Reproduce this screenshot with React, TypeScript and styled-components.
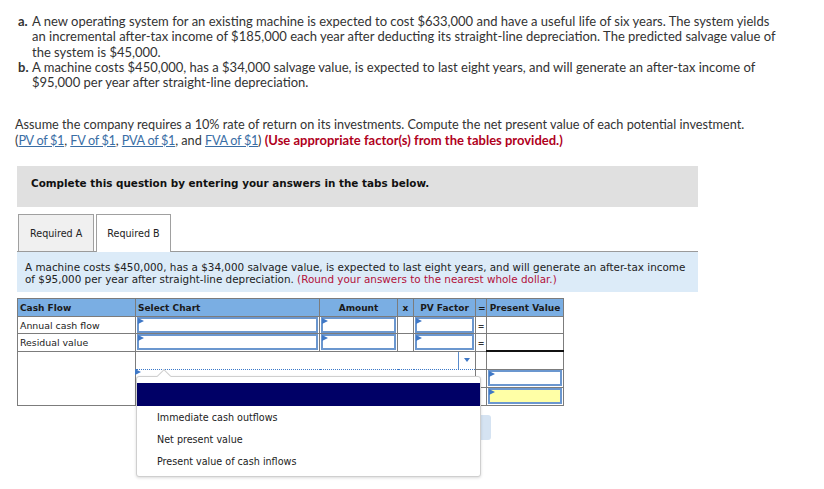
import React from "react";
import styled, { createGlobalStyle } from "styled-components";

const Global = createGlobalStyle`
  html, body { margin: 0; padding: 0; background: #fff; }
  body { font-family: "Lato", "Liberation Sans", sans-serif; color: #333; }
`;

const Page = styled.div`
  width: 824px;
  height: 489px;
  padding-top: 14px;
  box-sizing: border-box;
  position: relative;
  overflow: hidden;
`;

const Problem = styled.div`
  display: flex;
  flex-direction: column;
  padding-left: 18px;
  font-size: 13px;
  line-height: 15.3px;
  color: #333;
`;

const Item = styled.div`
  display: flex;
`;

const ItemLabel = styled.span`
  width: 14px;
  flex: none;
  font-weight: 700;
`;

const Assume = styled.p`
  margin: 27px 0 0 15px;
  font-size: 12.7px;
  line-height: 15.3px;
  color: #333;
`;

const Link = styled.a`
  color: #3a6ea5;
  text-decoration: underline;
  letter-spacing: -0.3px;
`;

const Red = styled.span`
  color: #b0001c;
  font-weight: 700;
  font-size: 13px;
`;

const Banner = styled.div`
  margin: 18px 0 0 17px;
  width: 681px;
  height: 41px;
  box-sizing: border-box;
  background: #e0e0e0;
  padding: 11px 0 0 14px;
  font-family: "DejaVu Sans", Verdana, sans-serif;
  font-weight: 700;
  font-size: 10.4px;
  color: #111;
`;

const Tabs = styled.div`
  display: flex;
  gap: 2px;
  margin: 7px 0 0 17px;
  width: 681px;
  border-bottom: 1px solid #9a9a9a;
  align-items: flex-end;
`;

const Tab = styled.div<{ $active?: boolean }>`
  box-sizing: border-box;
  padding: 0 ${(p) => (p.$active ? 10 : 11)}px;
  display: flex;
  align-items: center;
  border: 1px solid #a0a0a0;
  border-bottom: none;
  background: ${(p) => (p.$active ? "#fff" : "#f0f0f0")};
  margin-bottom: ${(p) => (p.$active ? "-1px" : "0")};
  height: ${(p) => (p.$active ? "38px" : "37px")};
  font-family: "DejaVu Sans", Verdana, sans-serif;
  font-size: 9.6px;
  color: #222;
  &:first-child { margin-left: 1px; }
`;

const Info = styled.div`
  margin-left: 17px;
  width: 681px;
  height: 40px;
  box-sizing: border-box;
  background: #dcebf8;
  padding: 10px 0 0 8px;
  font-family: "DejaVu Sans", Verdana, sans-serif;
  font-size: 10.4px;
  line-height: 11.5px;
  color: #222;
  white-space: nowrap;
`;

const Hint = styled.span`
  color: #b3103a;
`;

const TableWrap = styled.div`
  position: relative;
  margin: 6px 0 0 17px;
  width: 560px;
`;

const Grid = styled.table`
  border-collapse: collapse;
  table-layout: fixed;
  width: 546px;
  font-family: "DejaVu Sans", Verdana, sans-serif;
  font-size: 9.4px;
  color: #222;
`;

const Col = styled.col<{ $w: number }>`
  width: ${(p) => p.$w}px;
`;

const Th = styled.th<{ $align?: string }>`
  height: 17px;
  padding: 0 2px;
  background: #7aaee3;
  border: 1px solid #7c7c7c;
  font-weight: 700;
  font-size: 9px;
  color: #1a1a1a;
  text-align: ${(p) => p.$align || "left"};
  white-space: nowrap;
  overflow: hidden;
`;

const Td = styled.td<{ $center?: boolean; $total?: boolean }>`
  height: 16px;
  padding: 0;
  border: 1px solid #7c7c7c;
  border-top: ${(p) => (p.$total ? "2px solid #111" : "1px solid #7c7c7c")};
  text-align: ${(p) => (p.$center ? "center" : "left")};
  vertical-align: middle;
  white-space: nowrap;
`;

const Label = styled.span`
  padding-left: 2px;
`;

const Eq = styled.span`
  font-weight: 700;
  font-size: 8px;
  color: #333;
`;

const InputBox = styled.div<{ $yellow?: boolean }>`
  position: relative;
  height: 16px;
  box-sizing: border-box;
  border: 2px solid #6b97cf;
  background: ${(p) => (p.$yellow ? "#ffffa6" : "#fff")};
  margin: 0 1px;
`;

const Flag = styled.span`
  position: absolute;
  left: -1px;
  top: -1px;
  width: 0;
  height: 0;
  border-top: 3px solid transparent;
  border-bottom: 3px solid transparent;
  border-left: 6px solid #3f78c6;
`;

const SelectCell = styled.td`
  padding: 0;
  border: 1px dotted #3a78c9;
  vertical-align: top;
  position: relative;
`;

const SelectBox = styled.div<{ $h: number }>`
  position: relative;
  height: ${(p) => p.$h}px;
  display: flex;
  justify-content: flex-end;
`;

const Arrow = styled.div`
  width: 16px;
  height: 100%;
  border-left: 1px solid #5a8ccc;
  display: flex;
  align-items: center;
  justify-content: center;
  &::after {
    content: "";
    border-left: 3.5px solid transparent;
    border-right: 3.5px solid transparent;
    border-top: 4px solid #3f78c6;
  }
`;

const Popup = styled.div`
  position: absolute;
  left: 119px;
  top: 78px;
  width: 345px;
  height: 101px;
  box-sizing: border-box;
  background: #fff;
  border: 1px solid #cfcfcf;
  border-radius: 3px;
  box-shadow: 0 1px 3px rgba(0, 0, 0, 0.15);
  padding-top: 6px;
  font-family: "DejaVu Sans", Verdana, sans-serif;
  font-size: 9.6px;
  color: #222;
  z-index: 3;
  &::before {
    content: "";
    position: absolute;
    left: 22px;
    top: -6px;
    width: 9px;
    height: 9px;
    background: #fff;
    border-left: 1px solid #cfcfcf;
    border-top: 1px solid #cfcfcf;
    transform: rotate(45deg);
  }
`;

const Option = styled.div<{ $selected?: boolean }>`
  height: ${(p) => (p.$selected ? 23 : 22)}px;
  display: flex;
  align-items: center;
  padding-left: 20px;
  background: ${(p) => (p.$selected ? "#000066" : "transparent")};
  position: relative;
`;

const NavButton = styled.div`
  margin: 9px 0 0 390px;
  width: 84px;
  height: 25px;
  border-radius: 3px;
  background: #d5e3f2;
`;

export default function App() {
  return (
    <Page>
      <Global />
      <Problem>
        <Item>
          <ItemLabel>a.</ItemLabel>
          <span>
            A new operating system for an existing machine is expected to cost $633,000 and have a useful life of six years. The system yields
            <br />
            an incremental after-tax income of $185,000 each year after deducting its straight-line depreciation. The predicted salvage value of
            <br />
            the system is $45,000.
          </span>
        </Item>
        <Item>
          <ItemLabel>b.</ItemLabel>
          <span>
            A machine costs $450,000, has a $34,000 salvage value, is expected to last eight years, and will generate an after-tax income of
            <br />
            $95,000 per year after straight-line depreciation.
          </span>
        </Item>
      </Problem>
      <Assume>
        Assume the company requires a 10% rate of return on its investments. Compute the net present value of each potential investment.
        <br />
        (<Link>PV of $1</Link>, <Link>FV of $1</Link>, <Link>PVA of $1</Link>, and <Link>FVA of $1</Link>){" "}
        <Red>(Use appropriate factor(s) from the tables provided.)</Red>
      </Assume>
      <Banner>Complete this question by entering your answers in the tabs below.</Banner>
      <Tabs>
        <Tab>Required A</Tab>
        <Tab $active>Required B</Tab>
      </Tabs>
      <Info>
        A machine costs $450,000, has a $34,000 salvage value, is expected to last eight years, and will generate an after-tax income
        <br />
        of $95,000 per year after straight-line depreciation. <Hint>(Round your answers to the nearest whole dollar.)</Hint>
      </Info>
      <TableWrap>
        <Grid>
          <colgroup>
            <Col $w={118} />
            <Col $w={184} />
            <Col $w={78} />
            <Col $w={16} />
            <Col $w={62} />
            <Col $w={11} />
            <Col $w={77} />
          </colgroup>
          <thead>
            <tr>
              <Th>Cash Flow</Th>
              <Th>Select Chart</Th>
              <Th $align="center">Amount</Th>
              <Th $align="center">x</Th>
              <Th $align="center">PV Factor</Th>
              <Th $align="center">=</Th>
              <Th $align="center">Present Value</Th>
            </tr>
          </thead>
          <tbody>
            {["Annual cash flow", "Residual value"].map((r) => (
              <tr key={r}>
                <Td><Label>{r}</Label></Td>
                <Td><InputBox><Flag /></InputBox></Td>
                <Td><InputBox><Flag /></InputBox></Td>
                <Td />
                <Td><InputBox><Flag /></InputBox></Td>
                <Td $center><Eq>=</Eq></Td>
                <Td />
              </tr>
            ))}
            <tr>
              <Td rowSpan={3} />
              <SelectCell colSpan={4}>
                <SelectBox $h={17}><Arrow /></SelectBox>
              </SelectCell>
              <Td />
              <Td $total />
            </tr>
            <tr>
              <SelectCell colSpan={4} rowSpan={2}>
                <SelectBox $h={35}><Flag /></SelectBox>
              </SelectCell>
              <Td />
              <Td><InputBox><Flag /></InputBox></Td>
            </tr>
            <tr>
              <Td />
              <Td><InputBox $yellow><Flag /></InputBox></Td>
            </tr>
          </tbody>
        </Grid>
        <NavButton />
        <Popup>
          <Option $selected />
          <Option>Immediate cash outflows</Option>
          <Option>Net present value</Option>
          <Option>Present value of cash inflows</Option>
        </Popup>
      </TableWrap>
    </Page>
  );
}
